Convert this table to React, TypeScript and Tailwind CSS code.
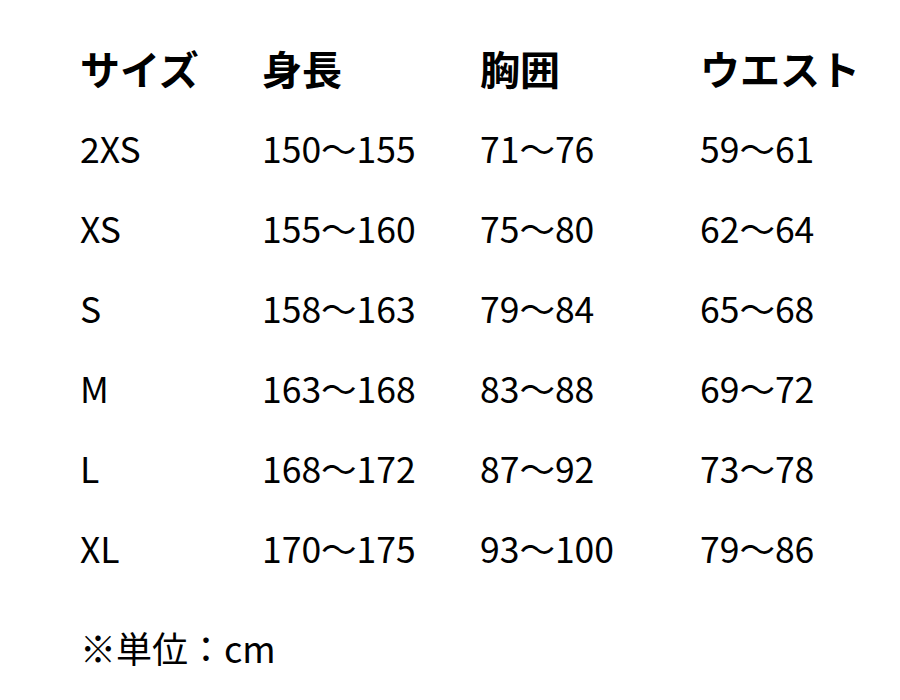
import React from "react";

const rows = [
  ["2XS", "150～155", "71～76", "59～61"],
  ["XS", "155～160", "75～80", "62～64"],
  ["S", "158～163", "79～84", "65～68"],
  ["M", "163～168", "83～88", "69～72"],
  ["L", "168～172", "87～92", "73～78"],
  ["XL", "170～175", "93～100", "79～86"],
];

export default function App() {
  return (
    <div
      className="w-[900px] h-[700px] bg-white text-black pl-[80px] pt-[28px]"
      style={{ fontFamily: '"Noto Sans CJK JP", "Noto Sans", sans-serif' }}
    >
      <div className="grid grid-cols-[182px_218px_220px_auto]">
        {["サイズ", "身長", "胸囲", "ウエスト"].map((h) => (
          <div key={h} className="h-[80px] flex items-center text-[40px] font-bold leading-none">
            {h}
          </div>
        ))}
        {rows.map((r) =>
          r.map((c, i) => (
            <div key={r[0] + i} className="h-[80px] flex items-center text-[35.5px] leading-none">
              {c}
            </div>
          ))
        )}
      </div>
      <div className="h-[100px] flex items-center mt-[9px] text-[36px] leading-none">※単位：cm</div>
    </div>
  );
}
